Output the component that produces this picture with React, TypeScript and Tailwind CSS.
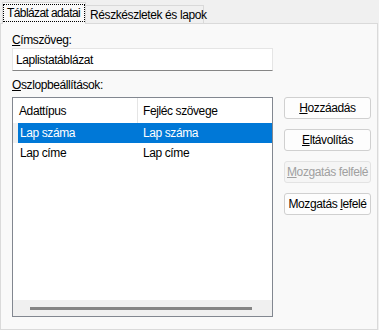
const font = { fontFamily: '"Liberation Sans", Arial, sans-serif' };

function Button({ children, disabled }: { children: React.ReactNode; disabled?: boolean }) {
  return (
    <div
      className={
        disabled
          ? "h-[22px] w-[87px] flex items-center justify-center whitespace-nowrap rounded-[3px] border border-[#e3e3e3] bg-[#f5f5f5] text-[#a0a0a0]"
          : "h-[22px] w-[87px] flex items-center justify-center whitespace-nowrap rounded-[3px] border border-[#d0d0d0] bg-[#fdfdfd] text-black"
      }
    >
      {children}
    </div>
  );
}

export default function App() {
  return (
    <div
      className="w-[379px] h-[330px] bg-[#f0f0f0] flex flex-col text-[12px] leading-[16px] tracking-[-0.4px] text-black"
      style={font}
    >
      {/* tabs */}
      <div className="h-[23px] flex items-end pl-[2px] shrink-0">
        <div className="relative z-10 h-[22px] mb-[-1px] w-[84px] bg-[#f9f9f9] border-l border-t border-r border-[#d9d9d9] pt-[1px]">
          <div className="h-[18px] border border-dotted border-black flex items-center pl-[3px] tracking-[-0.6px] whitespace-nowrap">
            Táblázat adatai
          </div>
        </div>
        <div className="h-[18px] w-[118px] bg-[#f0f0f0] border-t border-r border-[#d9d9d9] flex items-center pl-[4px] whitespace-nowrap">
          Részkészletek és lapok
        </div>
      </div>

      {/* panel */}
      <div className="flex-1 w-[378px] bg-[#f9f9f9] border border-[#dadada] pl-[11px] pt-[8px]">
        <div>
          <span className="underline">C</span>ímszöveg:
        </div>
        <div className="w-[261px] h-[23px] bg-white border border-[#e5e5e5] border-b-[#868686] flex items-center pl-[3px]">
          Laplistatáblázat
        </div>
        <div className="mt-[6px]">
          <span className="underline">O</span>szlopbeállítások:
        </div>

        <div className="mt-[4px] flex gap-[11px]">
          {/* list view */}
          <div className="w-[261px] h-[220px] bg-white border border-[#828790] flex flex-col">
            <div className="h-[25px] flex shrink-0">
              <div className="w-[125px] border-r border-[#e5e5e5] flex items-center pl-[6px]">Adattípus</div>
              <div className="flex-1 flex items-center pl-[5px]">Fejléc szövege</div>
            </div>
            <div className="h-[20px] flex">
              <div className="w-[5px] bg-[#f0f0f0]" />
              <div className="flex-1 bg-[#0078d7] text-white flex items-center">
                <div className="w-[120px] pl-[2px]">Lap száma</div>
                <div className="pl-[5px]">Lap száma</div>
              </div>
            </div>
            <div className="h-[20px] flex items-center">
              <div className="w-[125px] pl-[7px]">Lap címe</div>
              <div className="pl-[5px]">Lap címe</div>
            </div>
            <div className="flex-1" />
            <div className="h-[16px] bg-[#f0f0f0] flex items-center pl-[17px] shrink-0">
              <div className="h-[3px] w-[222px] bg-[#858585]" />
            </div>
          </div>

          {/* buttons */}
          <div className="flex flex-col gap-[10px]">
            <Button>
              <span className="underline">H</span>ozzáadás
            </Button>
            <Button>
              <span className="underline">E</span>ltávolítás
            </Button>
            <Button disabled>
              <span className="underline">M</span>ozgatás felfelé
            </Button>
            <Button>
              Mozgatás&nbsp;<span className="underline">l</span>efelé
            </Button>
          </div>
        </div>
      </div>
    </div>
  );
}
